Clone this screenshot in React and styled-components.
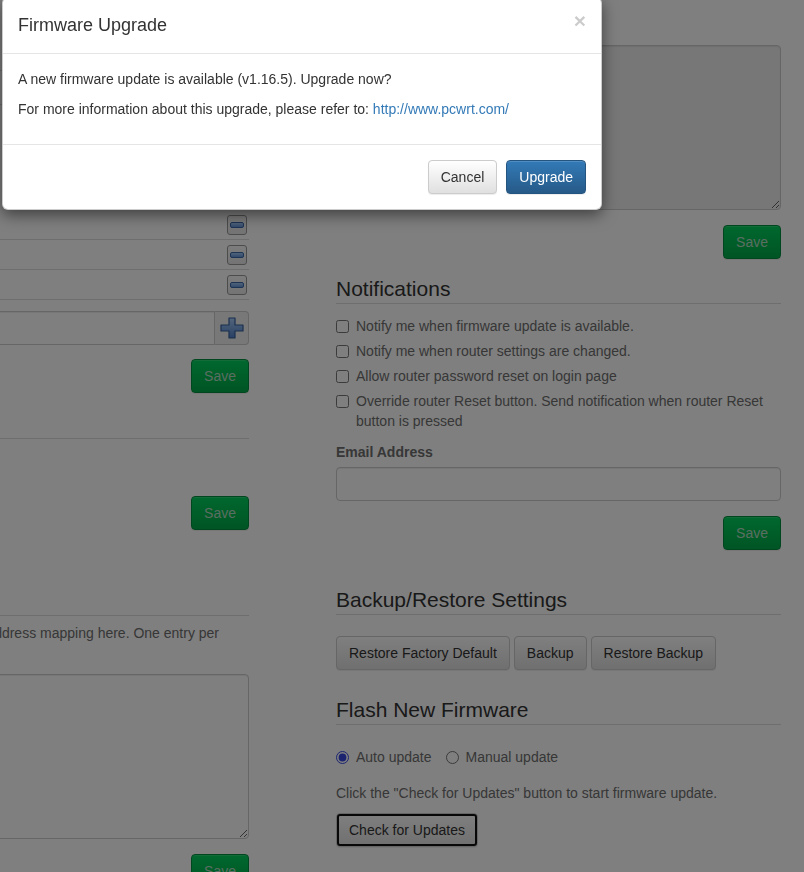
import React from 'react';
import styled, { createGlobalStyle } from 'styled-components';

const GlobalStyle = createGlobalStyle`
  html, body {
    margin: 0;
    overflow: hidden;
    background: #fff;
    font-family: "Liberation Sans", Arial, Helvetica, sans-serif;
    font-size: 14px;
    line-height: 20px;
    color: #333;
  }
  * { box-sizing: border-box; }
`;

const s = {
  Page: styled.div`
    display: grid;
    grid-template-columns: 432px 445px;
    column-gap: 87px;
    margin-left: -183px;
    align-items: start;
  `,
  Column: styled.div`
    display: flex;
    flex-direction: column;
    padding-top: ${(p) => p.$top || 0}px;
  `,
  SectionTitle: styled.h3`
    margin: ${(p) => p.$mt || 0}px 0 0;
    padding-bottom: 3px;
    min-height: 27px;
    font-size: 21px;
    font-weight: 400;
    line-height: 23px;
    color: #333;
    border-bottom: 1px solid #ddd;
  `,
  FieldLabel: styled.label`
    display: block;
    min-height: 20px;
    margin-top: ${(p) => p.$mt || 0}px;
    margin-bottom: 5px;
    font-weight: 700;
    color: #6e6e6e;
  `,
  TextArea: styled.textarea`
    display: block;
    flex: none;
    width: 100%;
    height: ${(p) => p.$h}px;
    margin-top: ${(p) => p.$mt || 0}px;
    padding: 6px 12px;
    font: inherit;
    color: #555;
    background: ${(p) => (p.disabled ? '#eee' : '#fff')};
    border: 1px solid #ccc;
    border-radius: 4px;
    box-shadow: inset 0 1px 1px rgba(0, 0, 0, 0.075);
    resize: vertical;
  `,
  TextInput: styled.input`
    display: block;
    flex: ${(p) => (p.$grouped ? '1 1 auto' : 'none')};
    width: 100%;
    height: 34px;
    min-width: 0;
    padding: 6px 12px;
    font: inherit;
    border: 1px solid #ccc;
    border-radius: ${(p) => (p.$grouped ? '4px 0 0 4px' : '4px')};
    box-shadow: inset 0 1px 1px rgba(0, 0, 0, 0.075);
  `,
  ButtonRow: styled.div`
    display: flex;
    justify-content: ${(p) => (p.$end ? 'flex-end' : 'flex-start')};
    gap: 4px;
    margin-top: ${(p) => p.$mt ?? 15}px;
  `,
  SaveButton: styled.button`
    height: 34px;
    padding: 6px 12px;
    font: inherit;
    color: #b4dcc2;
    background-image: linear-gradient(to bottom, #00d05c 0%, #00aa48 100%);
    border: 1px solid #008d3c;
    border-radius: 4px;
    box-shadow: inset 0 1px 0 rgba(255, 255, 255, 0.15), 0 1px 1px rgba(0, 0, 0, 0.075);
  `,
  DefaultButton: styled.button`
    height: 34px;
    padding: 6px 12px;
    font: inherit;
    color: #333;
    background-image: linear-gradient(to bottom, #fff 0%, #e0e0e0 100%);
    border: 1px solid #ccc;
    border-radius: 4px;
    box-shadow: inset 0 1px 0 rgba(255, 255, 255, 0.15), 0 1px 1px rgba(0, 0, 0, 0.075);
    outline: ${(p) => (p.$focused ? '2px solid #111' : 'none')};
    outline-offset: -3px;
  `,
  HeaderRow: styled.div`
    height: 34px;
    border-bottom: 1px solid #ddd;
  `,
  HostList: styled.div`
    margin-top: 105px;
  `,
  HostRow: styled.div`
    display: flex;
    align-items: center;
    justify-content: flex-end;
    height: 30px;
    padding-right: 2px;
    border-bottom: 1px solid #ddd;
  `,
  IconButton: styled.button`
    display: flex;
    align-items: center;
    justify-content: center;
    width: 20px;
    height: 20px;
    padding: 0;
    background: linear-gradient(to bottom, #fafafa, #e8e8e8);
    border: 1px solid #999;
    border-radius: 3px;
  `,
  InputGroup: styled.div`
    display: flex;
    margin-top: ${(p) => p.$mt || 0}px;
  `,
  AddonButton: styled.button`
    display: flex;
    align-items: center;
    justify-content: center;
    flex: none;
    width: 34px;
    height: 34px;
    padding: 0;
    background: #f0f0f0;
    border: 1px solid #ccc;
    border-left: none;
    border-radius: 0 4px 4px 0;
  `,
  Help: styled.p`
    margin: ${(p) => p.$mt || 0}px 0 0;
    padding-right: 20px;
    color: #6e6e6e;
  `,
  CheckList: styled.div`
    display: flex;
    flex-direction: column;
    gap: 5px;
    margin-top: 12px;
  `,
  CheckLabel: styled.label`
    display: flex;
    align-items: flex-start;
    color: #6e6e6e;
    input {
      flex-shrink: 0;
      width: 13px;
      height: 13px;
      margin: 4px 7px 0 0;
      accent-color: #3848e0;
    }
  `,
  RadioRow: styled.div`
    display: flex;
    gap: 14px;
    margin-top: 22px;
  `,
  Backdrop: styled.div`
    position: fixed;
    inset: 0;
    background: rgba(0, 0, 0, 0.5);
  `,
  Modal: styled.div`
    position: fixed;
    top: -3px;
    left: 2px;
    width: 600px;
    background: #fff;
    border: 1px solid rgba(0, 0, 0, 0.2);
    border-radius: 6px;
    box-shadow: 0 5px 15px rgba(0, 0, 0, 0.5);
    color: #333;
  `,
  ModalHeader: styled.div`
    display: flex;
    justify-content: space-between;
    align-items: flex-start;
    padding: 15px;
    border-bottom: 1px solid #e5e5e5;
  `,
  ModalTitle: styled.h4`
    margin: 0;
    font-size: 18px;
    font-weight: 400;
    line-height: 25px;
  `,
  Close: styled.button`
    margin-top: -3px;
    padding: 0;
    background: none;
    border: 0;
    font: 700 21px/1 "Liberation Sans", Arial, sans-serif;
    color: #000;
    opacity: 0.2;
    text-shadow: 0 1px 0 #fff;
  `,
  ModalBody: styled.div`
    padding: 15px;
    p {
      margin: 0 0 10px;
    }
    a {
      color: #337ab7;
      text-decoration: none;
    }
  `,
  ModalFooter: styled.div`
    display: flex;
    justify-content: flex-end;
    gap: 9px;
    padding: 15px;
    border-top: 1px solid #e5e5e5;
  `,
  PrimaryButton: styled.button`
    height: 34px;
    padding: 6px 12px;
    font: inherit;
    color: #fff;
    background-image: linear-gradient(to bottom, #337ab7 0%, #265a88 100%);
    border: 1px solid #245580;
    border-radius: 4px;
    box-shadow: inset 0 1px 0 rgba(255, 255, 255, 0.15), 0 1px 1px rgba(0, 0, 0, 0.075);
  `,
};

const MinusIcon = () => (
  <svg width="14" height="6" viewBox="0 0 14 6">
    <defs>
      <linearGradient id="mg" x1="0" y1="0" x2="0" y2="1">
        <stop offset="0" stopColor="#a8ccf8" />
        <stop offset="1" stopColor="#5d8fd6" />
      </linearGradient>
    </defs>
    <rect x="0.5" y="0.5" width="13" height="5" rx="1.5" fill="url(#mg)" stroke="#3d68a8" />
  </svg>
);

const PlusIcon = () => (
  <svg width="24" height="22" viewBox="0 0 24 22">
    <defs>
      <linearGradient id="pg" x1="0" y1="0" x2="0" y2="1">
        <stop offset="0" stopColor="#a8ccf8" />
        <stop offset="1" stopColor="#4f80c8" />
      </linearGradient>
    </defs>
    <path
      d="M9 1h6v7h8v6h-8v7H9v-7H1V8h8z"
      fill="url(#pg)"
      stroke="#34609e"
      strokeWidth="1.2"
      strokeLinejoin="round"
    />
  </svg>
);

const hostRows = [1, 2, 3];

const App = () => {
  return (
    <>
      <GlobalStyle />
      <s.Page>
        <s.Column>
          <s.SectionTitle $mt={44} />
          <s.HeaderRow />
          <s.HostList>
            {hostRows.map((h) => (
              <s.HostRow key={h}>
                <s.IconButton>
                  <MinusIcon />
                </s.IconButton>
              </s.HostRow>
            ))}
          </s.HostList>
          <s.InputGroup $mt={11}>
            <s.TextInput $grouped />
            <s.AddonButton>
              <PlusIcon />
            </s.AddonButton>
          </s.InputGroup>
          <s.ButtonRow $end $mt={14}>
            <s.SaveButton>Save</s.SaveButton>
          </s.ButtonRow>
          <s.SectionTitle $mt={19} />
          <s.ButtonRow $end $mt={57}>
            <s.SaveButton>Save</s.SaveButton>
          </s.ButtonRow>
          <s.SectionTitle $mt={59} />
          <s.Help $mt={7}>
            Enter static DHCP IP/MAC address mapping here. One entry per line.
          </s.Help>
          <s.TextArea $h={165} $mt={11} />
          <s.ButtonRow $end $mt={15}>
            <s.SaveButton>Save</s.SaveButton>
          </s.ButtonRow>
        </s.Column>

        <s.Column $top={20}>
          <s.FieldLabel />
          <s.TextArea $h={165} disabled />
          <s.ButtonRow $end $mt={15}>
            <s.SaveButton>Save</s.SaveButton>
          </s.ButtonRow>

          <s.SectionTitle $mt={18}>Notifications</s.SectionTitle>
          <s.CheckList>
            <s.CheckLabel>
              <input type="checkbox" />
              <span>Notify me when firmware update is available.</span>
            </s.CheckLabel>
            <s.CheckLabel>
              <input type="checkbox" />
              <span>Notify me when router settings are changed.</span>
            </s.CheckLabel>
            <s.CheckLabel>
              <input type="checkbox" />
              <span>Allow router password reset on login page</span>
            </s.CheckLabel>
            <s.CheckLabel>
              <input type="checkbox" />
              <span>
                Override router Reset button. Send notification when router Reset button is
                pressed
              </span>
            </s.CheckLabel>
          </s.CheckList>
          <s.FieldLabel $mt={11}>Email Address</s.FieldLabel>
          <s.TextInput />
          <s.ButtonRow $end $mt={15}>
            <s.SaveButton>Save</s.SaveButton>
          </s.ButtonRow>

          <s.SectionTitle $mt={38}>Backup/Restore Settings</s.SectionTitle>
          <s.ButtonRow $mt={21}>
            <s.DefaultButton>Restore Factory Default</s.DefaultButton>
            <s.DefaultButton>Backup</s.DefaultButton>
            <s.DefaultButton>Restore Backup</s.DefaultButton>
          </s.ButtonRow>

          <s.SectionTitle $mt={28}>Flash New Firmware</s.SectionTitle>
          <s.RadioRow>
            <s.CheckLabel>
              <input type="radio" name="mode" defaultChecked />
              <span>Auto update</span>
            </s.CheckLabel>
            <s.CheckLabel>
              <input type="radio" name="mode" />
              <span>Manual update</span>
            </s.CheckLabel>
          </s.RadioRow>
          <s.Help $mt={16}>Click the "Check for Updates" button to start firmware update.</s.Help>
          <s.ButtonRow $mt={10}>
            <s.DefaultButton $focused>Check for Updates</s.DefaultButton>
          </s.ButtonRow>
        </s.Column>
      </s.Page>

      <s.Backdrop />
      <s.Modal>
        <s.ModalHeader>
          <s.ModalTitle>Firmware Upgrade</s.ModalTitle>
          <s.Close>×</s.Close>
        </s.ModalHeader>
        <s.ModalBody>
          <p>A new firmware update is available (v1.16.5). Upgrade now?</p>
          <p>
            For more information about this upgrade, please refer to:{' '}
            <a href="#">http://www.pcwrt.com/</a>
          </p>
        </s.ModalBody>
        <s.ModalFooter>
          <s.DefaultButton>Cancel</s.DefaultButton>
          <s.PrimaryButton>Upgrade</s.PrimaryButton>
        </s.ModalFooter>
      </s.Modal>
    </>
  );
};

export default App;
